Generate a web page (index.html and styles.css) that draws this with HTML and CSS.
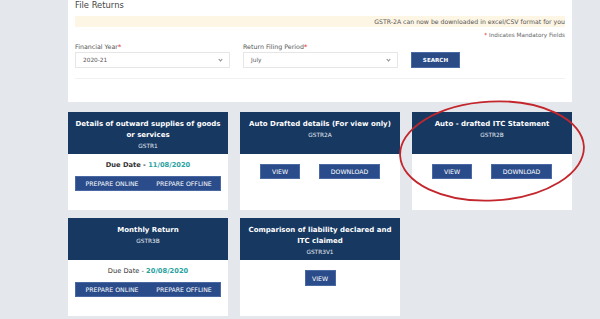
FILE: index.html
```html
<!DOCTYPE html>
<html>
<head>
  <meta charset="UTF-8">
  <link rel="stylesheet" href="styles.css">
</head>
<body>
  <div class="page">
    <div class="panel">
      <div class="panel-title">File Returns</div>
      <div class="notice">GSTR-2A can now be downloaded in excel/CSV format for you</div>
      <div class="mandatory"><span class="req">*</span> Indicates Mandatory Fields</div>
      <div class="form-row">
        <div class="field">
          <label>Financial Year<span class="req">*</span></label>
          <div class="select">2020-21<span class="chev"></span></div>
        </div>
        <div class="field">
          <label>Return Filing Period<span class="req">*</span></label>
          <div class="select">July<span class="chev"></span></div>
        </div>
        <button class="btn search-btn">SEARCH</button>
      </div>
      <div class="divider"></div>
    </div>

    <div class="cards">
      <div class="card">
        <div class="card-head">
          <div class="card-title">Details of outward supplies of goods or services</div>
          <div class="card-sub">GSTR1</div>
        </div>
        <div class="card-body">
          <div class="due">Due Date - <span class="due-date">11/08/2020</span></div>
          <div class="prepare-bar">
            <button class="btn prep">PREPARE ONLINE</button>
            <button class="btn prep">PREPARE OFFLINE</button>
          </div>
        </div>
      </div>

      <div class="card">
        <div class="card-head">
          <div class="card-title">Auto Drafted details (For view only)</div>
          <div class="card-sub">GSTR2A</div>
        </div>
        <div class="card-body">
          <div class="btn-row">
            <button class="btn act view">VIEW</button>
            <button class="btn act download">DOWNLOAD</button>
          </div>
        </div>
      </div>

      <div class="card">
        <div class="card-head">
          <div class="card-title">Auto - drafted ITC Statement</div>
          <div class="card-sub">GSTR2B</div>
        </div>
        <div class="card-body">
          <div class="btn-row">
            <button class="btn act view">VIEW</button>
            <button class="btn act download">DOWNLOAD</button>
          </div>
        </div>
      </div>

      <div class="card">
        <div class="card-head">
          <div class="card-title">Monthly Return</div>
          <div class="card-sub">GSTR3B</div>
        </div>
        <div class="card-body">
          <div class="due plain">Due Date - <span class="due-date">20/08/2020</span></div>
          <div class="prepare-bar">
            <button class="btn prep">PREPARE ONLINE</button>
            <button class="btn prep">PREPARE OFFLINE</button>
          </div>
        </div>
      </div>

      <div class="card">
        <div class="card-head">
          <div class="card-title">Comparison of liability declared and ITC claimed</div>
          <div class="card-sub">GSTR3V1</div>
        </div>
        <div class="card-body">
          <div class="btn-row">
            <button class="btn act view small">VIEW</button>
          </div>
        </div>
      </div>
    </div>

    <!-- red highlight drawn over the GSTR2B card -->
    <svg class="highlight" width="190" height="106" viewBox="0 0 190 106">
      <ellipse cx="95" cy="53" rx="92" ry="49.5" fill="none" stroke="#c3262c" stroke-width="1.8" transform="rotate(-3 95 53)"/>
    </svg>
  </div>
</body>
</html>
```

FILE: styles.css
```css
body { margin: 0; background: #e4e7eb; font-family: "DejaVu Sans", Verdana, sans-serif; width: 600px; height: 319px; overflow: hidden; }
.page { position: relative; padding-left: 68px; width: 504px; }
.panel { background: #fff; height: 102px; padding: 0 7px; box-sizing: border-box; }
.panel-title { font-size: 8.4px; line-height: 11px; color: #444; }
.notice { margin-top: 5px; height: 11px; background: #fdf6e4; font-size: 6.2px; line-height: 11px; color: #555; text-align: right; }
.mandatory { font-size: 5.7px; line-height: 8px; color: #666; text-align: right; margin-top: 4px; }
.req { color: #d22; }
.form-row { display: flex; align-items: flex-end; gap: 13px; margin-top: 3px; }
.field { width: 155px; }
.field label { display: block; font-size: 6.3px; line-height: 10px; color: #555; }
.select { position: relative; height: 16px; border: 1px solid #e6e6e6; box-sizing: border-box; font-size: 5.8px; line-height: 14px; color: #555; padding-left: 7px; }
.chev { position: absolute; right: 7px; top: 5px; width: 2px; height: 2px; border-right: 0.8px solid #888; border-bottom: 0.8px solid #888; transform: rotate(45deg); }
.btn { border: none; color: #fff; font-family: "DejaVu Sans", Verdana, sans-serif; cursor: pointer; padding: 0; }
.search-btn { width: 49px; height: 16px; background: #2a4b86; font-size: 5.6px; font-weight: bold; border: 1px solid #4a6aa6; box-sizing: border-box; }
.divider { margin-top: 10px; border-top: 1px solid #f1f1f1; }
.cards { display: grid; grid-template-columns: repeat(3, 1fr); column-gap: 12px; row-gap: 8px; margin-top: 10px; }
.card { background: #fff; height: 98px; }
.card-head { height: 42px; background: #173861; color: #fff; text-align: center; padding: 7px 5px 0; box-sizing: border-box; }
.card-title { font-size: 7px; font-weight: bold; line-height: 11px; }
.card-sub { font-size: 5.8px; line-height: 11px; color: #e8ecf3; }
.card-body { padding: 6px 7px 0; }
.due { text-align: center; font-size: 6.7px; line-height: 10px; font-weight: bold; color: #333; }
.due.plain { font-weight: normal; }
.due-date { color: #2aa39f; font-weight: bold; }
.prepare-bar { display: flex; margin-top: 6px; height: 15px; border: 1px solid #4a69a3; box-sizing: border-box; background: #2a4c8a; }
.prep { flex: 1; background: transparent; font-size: 6.2px; }
.btn-row { display: flex; justify-content: center; gap: 19px; margin-top: 4px; }
.act { height: 15px; background: #2a4c8a; font-size: 6.2px; border: 1px solid #4a69a3; box-sizing: border-box; }
.view { width: 40px; }
.download { width: 61px; }
.view.small { width: 31px; height: 16px; }
.highlight { position: absolute; left: 397px; top: 98px; }
```
